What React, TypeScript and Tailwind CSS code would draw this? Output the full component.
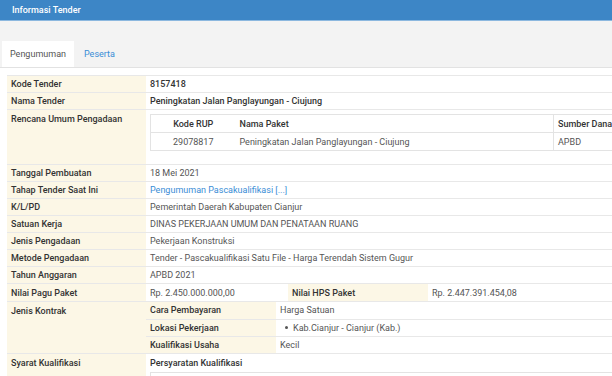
const rows1 = [
  { label: 'Tanggal Pembuatan', value: '18 Mei 2021' },
  { label: 'Tahap Tender Saat Ini', value: 'Pengumuman Pascakualifikasi [...]', link: true },
  { label: 'K/L/PD', value: 'Pemerintah Daerah Kabupaten Cianjur' },
  { label: 'Satuan Kerja', value: 'DINAS PEKERJAAN UMUM DAN PENATAAN RUANG' },
  { label: 'Jenis Pengadaan', value: 'Pekerjaan Konstruksi' },
  { label: 'Metode Pengadaan', value: 'Tender - Pascakualifikasi Satu File - Harga Terendah Sistem Gugur' },
  { label: 'Tahun Anggaran', value: 'APBD 2021' },
];

const kontrak = [
  { label: 'Cara Pembayaran', value: 'Harga Satuan' },
  { label: 'Lokasi Pekerjaan', value: 'Kab.Cianjur - Cianjur (Kab.)', bullet: true },
  { label: 'Kualifikasi Usaha', value: 'Kecil' },
];

const th = 'h-[17px] px-[4px] align-middle text-left font-medium text-[#333] bg-[#fcf7e6] border-t border-[#e8e8e8]';
const td = 'h-[17px] px-[4px] align-middle border-t border-[#e8e8e8]';

export default function App() {
  return (
    <div className="w-[612px] h-[376px] overflow-hidden bg-white font-['Roboto',sans-serif] text-[9px] leading-[12px]">
      {/* Panel heading */}
      <div className="h-[21px] bg-[#3d86c6] border-b border-[#8cb8df] flex items-center px-[12px]">
        <span className="text-white font-medium text-[9px]">Informasi Tender</span>
      </div>

      {/* Tabs */}
      <div className="h-[47px] bg-[#f3f3f3] border-b border-[#e2e2e2] flex items-end pl-[2px]">
        <div className="h-[26px] bg-white px-[8px] flex items-center text-[#555]">Pengumuman</div>
        <div className="h-[26px] px-[10px] flex items-center text-[#3a8dd6]">Peserta</div>
      </div>

      {/* Detail table */}
      <div className="pl-[7px] pt-[7px]">
        <table className="w-[660px] border-collapse border-b border-[#e8e8e8]">
          <tbody>
            <tr>
              <th className={`${th} w-[139px]`}>Kode Tender</th>
              <td className={`${td} font-medium text-[#333]`}>8157418</td>
            </tr>
            <tr>
              <th className={th}>Nama Tender</th>
              <td className={`${td} font-medium text-[#333]`}>Peningkatan Jalan Panglayungan - Ciujung</td>
            </tr>
            <tr>
              <th className={`${th} align-top pt-[3px]`}>Rencana Umum Pengadaan</th>
              <td className="px-[4px] pt-[4px] pb-[13px] border-t border-[#e8e8e8] align-top">
                <table className="w-full border-collapse border border-[#e3e3e3]">
                  <thead>
                    <tr>
                      <th className="w-[85px] h-[18px] font-medium text-[#333] text-center">Kode RUP</th>
                      <th className="w-[318px] h-[18px] px-[4px] font-medium text-[#333] text-left">Nama Paket</th>
                      <th className="h-[18px] px-[4px] font-medium text-[#333] text-left border-l border-[#e3e3e3]">Sumber Dana</th>
                    </tr>
                  </thead>
                  <tbody>
                    <tr>
                      <td className="h-[18px] text-center text-[#555] border-t border-[#e3e3e3]">29078817</td>
                      <td className="h-[18px] px-[4px] text-[#555] border-t border-[#e3e3e3]">Peningkatan Jalan Panglayungan - Ciujung</td>
                      <td className="h-[18px] px-[4px] text-[#555] border-t border-l border-[#e3e3e3]">APBD</td>
                    </tr>
                  </tbody>
                </table>
              </td>
            </tr>
            {rows1.map((r) => (
              <tr key={r.label}>
                <th className={th}>{r.label}</th>
                <td className={`${td} ${r.link ? 'text-[#3a8dd6]' : 'text-[#555]'}`}>{r.value}</td>
              </tr>
            ))}
            <tr>
              <th className={th}>Nilai Pagu Paket</th>
              <td className="p-0 border-t border-[#e8e8e8]">
                <div className="flex h-[17px] items-stretch">
                  <div className="w-[142px] px-[4px] flex items-center text-[#555]">Rp. 2.450.000.000,00</div>
                  <div className="w-[140px] px-[4px] flex items-center bg-[#fcf7e6] font-medium text-[#333]">Nilai HPS Paket</div>
                  <div className="px-[4px] flex items-center text-[#555]">Rp. 2.447.391.454,08</div>
                </div>
              </td>
            </tr>
            <tr>
              <th className={`${th} align-top pt-[3px]`}>Jenis Kontrak</th>
              <td className="p-0 border-t border-[#e8e8e8]">
                <table className="w-full border-collapse">
                  <tbody>
                    {kontrak.map((k, i) => (
                      <tr key={k.label}>
                        <th className={`h-[17px] w-[130px] px-[4px] text-left font-medium text-[#333] bg-[#fcf7e6] ${i > 0 ? 'border-t border-[#e8e8e8]' : ''}`}>
                          {k.label}
                        </th>
                        <td className={`h-[17px] px-[4px] text-[#555] ${i > 0 ? 'border-t border-[#e8e8e8]' : ''}`}>
                          {k.bullet ? (
                            <span className="flex items-center gap-[5px] pl-[5px]">
                              <span className="w-[3px] h-[3px] rounded-full bg-[#555]" />
                              {k.value}
                            </span>
                          ) : (
                            k.value
                          )}
                        </td>
                      </tr>
                    ))}
                  </tbody>
                </table>
              </td>
            </tr>
            <tr>
              <th className={`${th} align-top pt-[3px]`}>Syarat Kualifikasi</th>
              <td className="px-[4px] pt-[3px] border-t border-[#e8e8e8] align-top">
                <div className="font-medium text-[#333] h-[12px]">Persyaratan Kualifikasi</div>
                <div className="mt-[3px] border border-[#e3e3e3] px-[6px] py-[2px] text-[#555]">
                  2. Peserta yang berbadan usaha harus memiliki Izin Usaha Jasa Konstruksi (IUJK) yang masih berlaku
                </div>
              </td>
            </tr>
          </tbody>
        </table>
      </div>
    </div>
  );
}
